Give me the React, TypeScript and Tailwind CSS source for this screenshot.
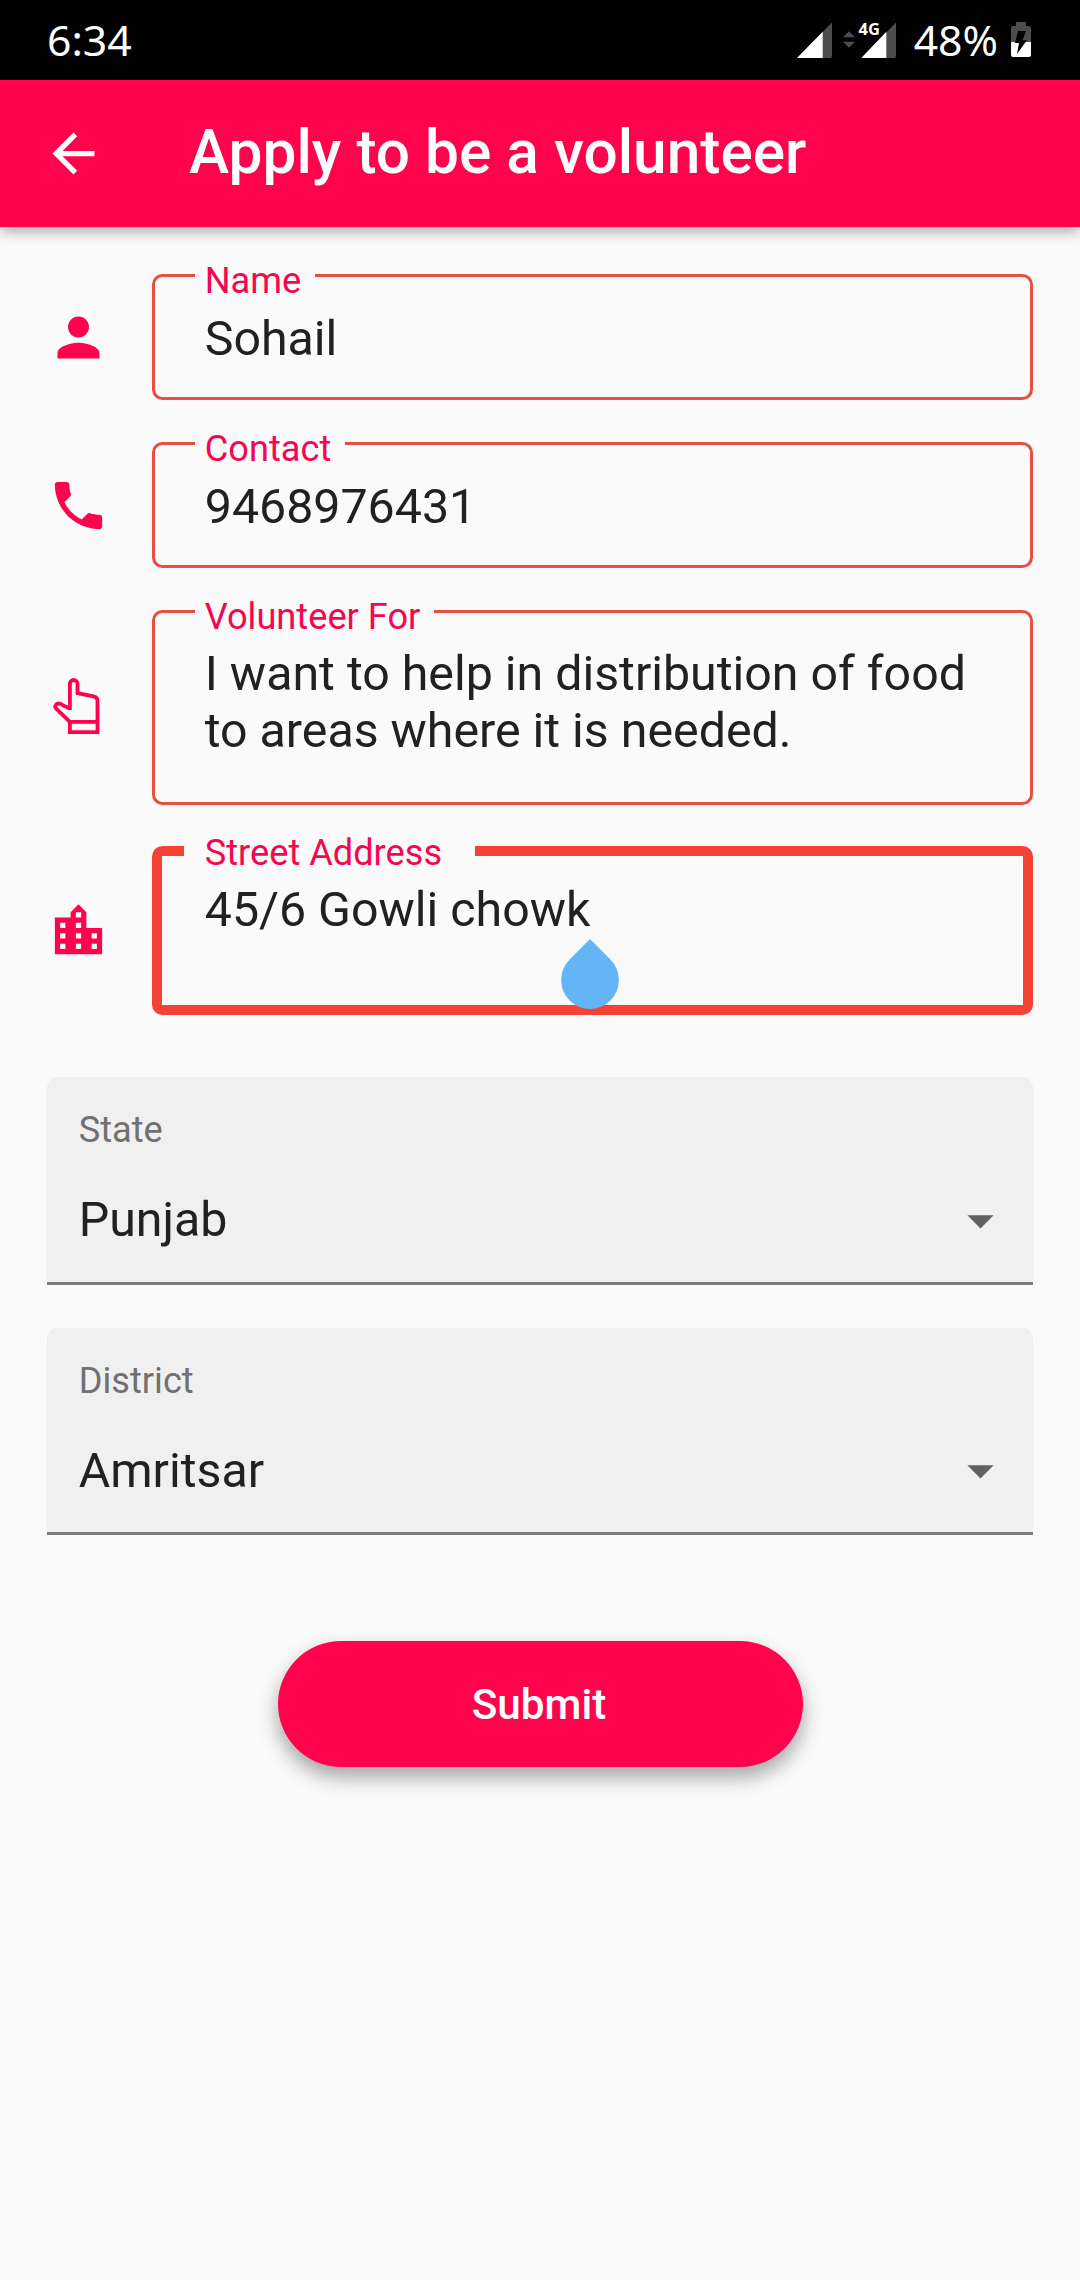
import type { ReactNode } from "react";
import { MdArrowBack, MdArrowDropDown, MdLocationCity, MdPerson, MdPhone } from "react-icons/md";

function HandIcon() {
  return (
    <svg width="63" height="63" viewBox="0 0 63 63" fill="none" stroke="currentColor" strokeWidth="3.800">
      <path d="M22.9 34V7.800a3.800 3.800 0 0 1 7.600 0v9.400l16.200 3.200c2.400.6 3.800 2 3.800 4.400v31.400h-27.600V45.900L8.900 32.300c-1.600-1.600 0-4.800 2.600-4.800 1.400 0 3.400.8 4.600 2l6.800 3" />
      <path d="M22.900 45.900h27.600" />
    </svg>
  );
}

function StatusBar() {
  return (
    <div className="flex h-20 items-center justify-between bg-black pr-[49px] pl-[47px] font-['Noto_Sans',sans-serif] text-[42.7px] leading-none font-normal text-white">
      <span>6:34</span>
      <div className="flex items-center">
        <svg className="overflow-visible" width="101" height="40" viewBox="796 20 101 40">
          <path d="M797 58L832 22.500V56q0 2-2 2z" fill="#4d4d4d" />
          <path d="M797 58L822.700 31.700V58z" fill="#fff" />
          <path d="M843 37.200L849 31.200L855 37.200zM843 41.700L849 47.700L855 41.700z" fill="#4d4d4d" />
          <path d="M861.300 58L896 22.500V56q0 2-2 2z" fill="#4d4d4d" />
          <path d="M861.300 58L886.300 31.700V58z" fill="#fff" />
          <path d="M857 20h25v15l-3 2h-22z" fill="#000" />
          <text x="858.500" y="35" fill="#fff" fontSize="16.500" fontWeight="700">4G</text>
        </svg>
        <span className="ml-[17px]">48%</span>
        <svg className="ml-[13px]" width="20" height="40" viewBox="1011 20 20 40">
          <path d="M1016 22h10v4h3q2 0 2 2v14h-20V28q0-2 2-2h3z" fill="#4d4d4d" />
          <path d="M1011 42h20v13q0 2-2 2h-16q-2 0-2-2z" fill="#fff" />
          <path d="M1018 31h8l-3.500 9h4.500L1017 54l2-11h-4z" fill="#000" />
        </svg>
      </div>
    </div>
  );
}

function Field({ icon, label, className, focused, children }: { icon: ReactNode; label: string; className: string; focused?: boolean; children: ReactNode }) {
  return (
    <div className="flex items-center gap-[42px]">
      <span className="text-[63px] text-[#ff034d]">{icon}</span>
      <div className={`relative flex-1 rounded-[10.5px] ${focused ? "border-[10.5px] border-[#f44336] pt-[26px] pl-[42.5px]" : "border-[3px] border-[#e74f43] pl-[49.5px]"} ${className}`}>
        <span className={`absolute bg-[#fafafa] text-[36.2px] leading-[42px] text-[#f5074f] ${focused ? "-top-[24px] left-[21.5px] pr-[32.5px] pl-[21px]" : "-top-[17px] left-[40px] pr-[14px] pl-[9.500px]"}`}>
          {label}
        </span>
        <div className="text-[48.3px] leading-[56.6px] whitespace-nowrap">{children}</div>
      </div>
    </div>
  );
}

function Select({ label, value }: { label: string; value: string }) {
  return (
    <div className="h-[207.5px] rounded-t-[10.5px] border-b-[3px] border-[#7a7a7a] bg-[#f0f0f0] pt-[32px] pr-[21px] pl-[31.5px]">
      <div className="text-[36.2px] leading-[42px] text-[#717171]">{label}</div>
      <div className="mt-[36.5px] flex items-center justify-between text-[48.3px] leading-[63px]">
        {value}
        <MdArrowDropDown className="mt-px text-[63px] text-[#616161]" />
      </div>
    </div>
  );
}

export default function App() {
  return (
    <div className="h-[2280px] w-[1080px] overflow-hidden bg-[#fafafa] font-[Roboto,sans-serif] text-[#212121]">
      <StatusBar />
      <header className="flex h-[147px] items-center bg-[#ff034d] pl-[42px] text-white shadow-[0_5px_12px_rgba(0,0,0,0.3)]">
        <MdArrowBack className="text-[63px]" />
        <h1 className="ml-[84px] text-[60.4px] leading-none font-medium">Apply to be a volunteer</h1>
      </header>

      <main className="px-[47.25px] pt-[47px]">
        <div className="flex flex-col gap-[42px]">
          <Field icon={<MdPerson />} label="Name" className="h-[126px] pt-[34px]">Sohail</Field>
          <Field icon={<MdPhone />} label="Contact" className="h-[126px] pt-[34px]">9468976431</Field>
          <Field icon={<HandIcon />} label="Volunteer For" className="-mb-px h-[195px] pt-[33px]">
            I want to help in distribution of food<br />to areas where it is needed.
          </Field>
          <Field icon={<MdLocationCity />} label="Street Address" className="h-[169px]" focused>
            <span className="relative">
              45/6 Gowli chowk
              {/* text cursor handle */}
              <svg className="absolute top-[58px] -right-[28px]" width="58" height="70" viewBox="0 0 58 70" fill="#64b5f6">
                <path d="M29 0L49.400 20.600A28.900 28.900 0 1 1 8.600 20.600z" />
              </svg>
            </span>
          </Field>
        </div>

        <div className="mt-[62.3px] flex flex-col gap-[43px]">
          <Select label="State" value="Punjab" />
          <Select label="District" value="Amritsar" />
        </div>

        <button className="mx-auto mt-[105.7px] block h-[126px] w-[525px] rounded-full bg-[#ff034d] pt-px pr-[2px] text-[42.3px] font-medium text-white shadow-[0_10px_20px_rgba(0,0,0,0.35)]">
          Submit
        </button>
      </main>
    </div>
  );
}
